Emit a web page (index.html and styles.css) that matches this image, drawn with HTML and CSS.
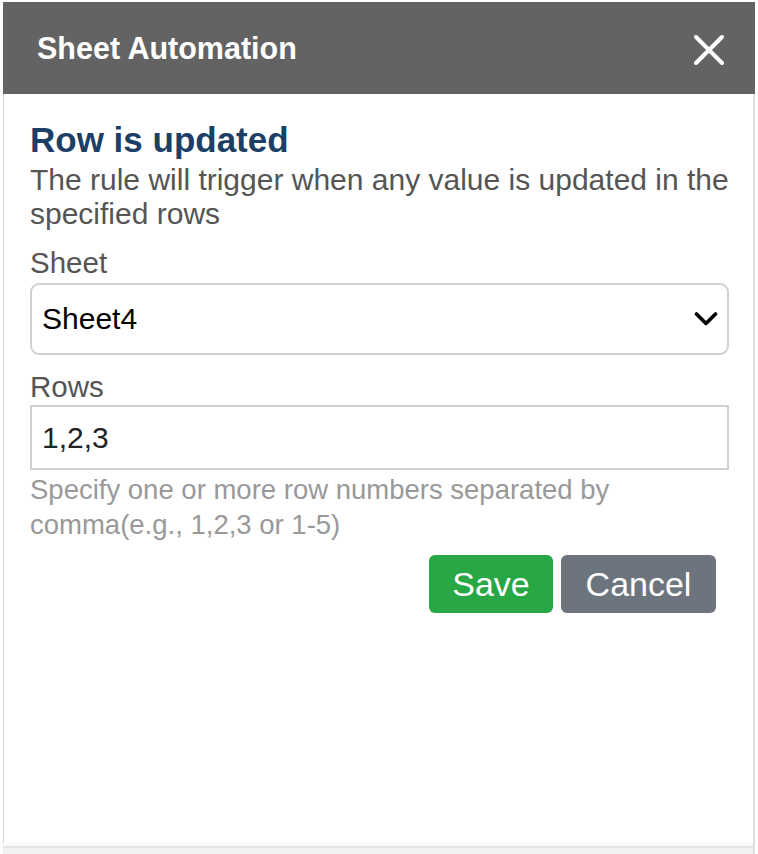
FILE: index.html
```html
<!DOCTYPE html>
<html lang="en">
<head>
<meta charset="utf-8">
<title>Sheet Automation</title>
<link rel="stylesheet" href="styles.css">
</head>
<body>
<div class="dialog">
  <div class="header">
    <span class="title">Sheet Automation</span>
    <svg class="close" width="30" height="30" viewBox="0 0 30 30" aria-label="Close">
      <path d="M2 2 L28 28 M28 2 L2 28" stroke="#fff" stroke-width="4" stroke-linecap="round" fill="none"/>
    </svg>
  </div>
  <div class="content">
    <h2 class="heading">Row is updated</h2>
    <p class="desc">The rule will trigger when any value is updated in the specified rows</p>
    <label class="label">Sheet</label>
    <div class="select">
      <span class="select-value">Sheet4</span>
      <svg class="chevron" width="24" height="16" viewBox="0 0 24 16">
        <path d="M2.5 3 L12 12.5 L21.5 3" stroke="#000" stroke-width="3.6" stroke-linecap="round" stroke-linejoin="round" fill="none"/>
      </svg>
    </div>
    <label class="label label-rows">Rows</label>
    <input class="input" type="text" value="1,2,3">
    <p class="help">Specify one or more row numbers separated by comma(e.g., 1,2,3 or 1-5)</p>
    <div class="actions">
      <button class="btn btn-save">Save</button>
      <button class="btn btn-cancel">Cancel</button>
    </div>
  </div>
  <div class="footer"></div>
</div>
</body>
</html>
```
FILE: styles.css
```css
html, body {
  margin: 0;
  padding: 0;
  background: #fff;
}
body {
  font-family: "Liberation Sans", Arial, Helvetica, sans-serif;
  height: 854px;
  overflow: hidden;
}
.dialog {
  margin: 2px 0 0 3px;
  width: 752px;
  height: 852px;
  display: flex;
  flex-direction: column;
  box-sizing: border-box;
}
.header {
  height: 92px;
  flex: none;
  background: #636363;
  display: flex;
  align-items: center;
  justify-content: space-between;
  padding: 0 31px 0 34px;
}
.title {
  color: #fff;
  font-weight: 700;
  font-size: 30.5px;
  line-height: 36px;
}
.close {
  display: block;
  margin-top: 3px;
}
.content {
  flex: 1;
  border-left: 1px solid #d4d4d4;
  border-right: 2px solid #dedede;
  padding: 26px 24px 0 26px;
  box-sizing: border-box;
}
.heading {
  margin: 0;
  font-size: 35px;
  line-height: 40px;
  font-weight: 700;
  color: #1d3f66;
}
.desc {
  margin: 3px 0 0;
  font-size: 30px;
  line-height: 34px;
  color: #555;
}
.label {
  display: block;
  margin-top: 15px;
  font-size: 29.5px;
  line-height: 34px;
  color: #555;
}
.select {
  margin-top: 3px;
  height: 72px;
  box-sizing: border-box;
  border: 2px solid #d0d0d0;
  border-radius: 9px;
  display: flex;
  align-items: center;
  justify-content: space-between;
  padding: 0 9px 0 10px;
}
.select-value {
  font-size: 30px;
  color: #000;
}
.chevron {
  display: block;
}
.input {
  display: block;
  margin: 1px 0 0;
  width: 699px;
  height: 65px;
  box-sizing: border-box;
  border: 2px solid #d0d0d0;
  border-radius: 0;
  padding: 0 10px;
  font-family: "Liberation Sans", Arial, Helvetica, sans-serif;
  font-size: 30px;
  color: #222;
  outline: none;
  background: #fff;
}
.help {
  margin: 2px 0 0;
  font-size: 27.5px;
  line-height: 35px;
  color: #999;
}
.actions {
  margin-top: 13px;
  display: flex;
  justify-content: flex-end;
  gap: 8px;
  padding-right: 13px;
}
.btn {
  height: 58px;
  border: none;
  border-radius: 6px;
  color: #fff;
  font-family: "Liberation Sans", Arial, Helvetica, sans-serif;
  font-size: 34px;
  padding: 0 23px;
  cursor: pointer;
}
.btn-save {
  background: #28a745;
  width: 124px;
}
.btn-cancel {
  background: #6c757d;
  width: 155px;
}
.footer {
  height: 11px;
  flex: none;
  border-right: 2px solid #dedede;
  background: linear-gradient(#f8f8fa 0 3px, #e6e6e9 3px 5px, #f1f1f4 5px);
}
```
